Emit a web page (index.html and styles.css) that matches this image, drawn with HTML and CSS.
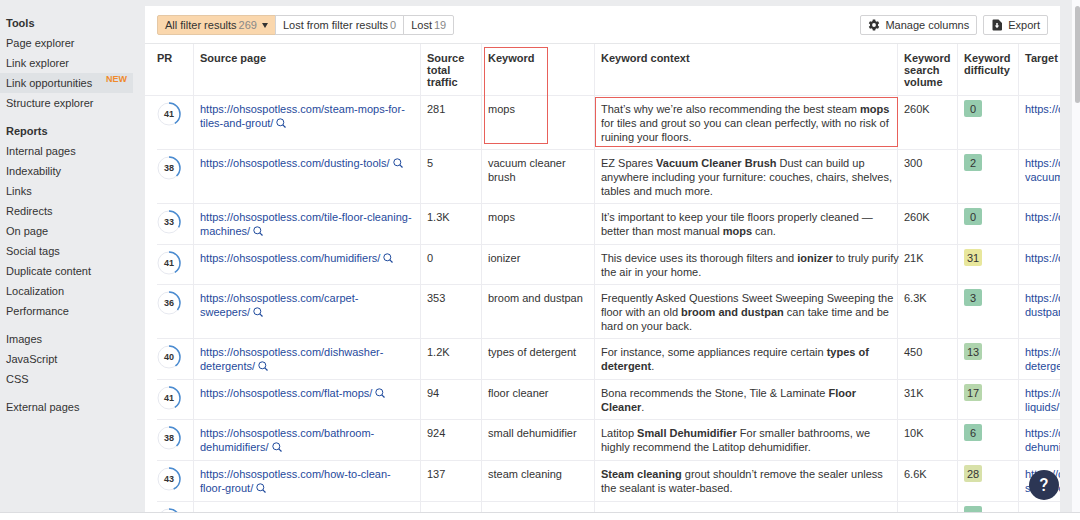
FILE: index.html
```html
<!DOCTYPE html>
<html lang="en">
<head>
<meta charset="UTF-8">
<meta name="viewport" content="width=device-width, initial-scale=1.0">
<title>Link opportunities</title>
<link rel="stylesheet" href="styles.css">
</head>
<body>

<!-- Shared icons -->
<svg class="sprite" aria-hidden="true">
  <symbol id="search" viewBox="0 0 10 10">
    <circle cx="4.3" cy="4.3" r="3.5" fill="none" stroke="currentColor" stroke-width="1"/>
    <path d="M6.8 6.8 9.5 9.5" stroke="currentColor" stroke-width="1.2"/>
  </symbol>
</svg>

<div class="app">
  <nav class="sidebar">
    <h2>Tools</h2>
    <ul>
      <li><a href="#">Page explorer</a></li>
      <li><a href="#">Link explorer</a></li>
      <li class="active"><a href="#">Link opportunities</a><span class="new">NEW</span></li>
      <li><a href="#">Structure explorer</a></li>
    </ul>
    <h2>Reports</h2>
    <ul>
      <li><a href="#">Internal pages</a></li>
      <li><a href="#">Indexability</a></li>
      <li><a href="#">Links</a></li>
      <li><a href="#">Redirects</a></li>
      <li><a href="#">On page</a></li>
      <li><a href="#">Social tags</a></li>
      <li><a href="#">Duplicate content</a></li>
      <li><a href="#">Localization</a></li>
      <li><a href="#">Performance</a></li>
    </ul>
    <ul>
      <li><a href="#">Images</a></li>
      <li><a href="#">JavaScript</a></li>
      <li><a href="#">CSS</a></li>
    </ul>
    <ul>
      <li><a href="#">External pages</a></li>
    </ul>
  </nav>

  <main class="panel">
    <div class="toolbar">
      <div class="filters">
        <button class="filter selected">All filter results <span>269</span><i class="caret"></i></button>
        <button class="filter">Lost from filter results <span>0</span></button>
        <button class="filter">Lost <span>19</span></button>
      </div>
      <div class="actions">
        <button class="action">
          <svg width="12" height="12" viewBox="0 0 12 12"><path fill="#333" fill-rule="evenodd" d="M4.8 0.6h2.4l.3 1.5 1 .6 1.5-.5 1.2 2.1-1.2 1v1.4l1.2 1-1.2 2.1-1.5-.5-1 .6-.3 1.500H4.800l-.3-1.500-1-.6-1.500.5L.8 7.700l1.200-1V5.300l-1.200-1L2 2.200l1.500.5 1-.6zM6 4.100a1.900 1.900 0 1 0 0 3.800 1.900 1.900 0 0 0 0-3.800z"/></svg>
          Manage columns
        </button>
        <button class="action">
          <svg width="12" height="12" viewBox="0 0 12 12"><path fill="#333" d="M2.500 .5h5l3.500 3.500v6.500a1 1 0 0 1-1 1H2.500a1 1 0 0 1-1-1v-9a1 1 0 0 1 1-1z"/><path d="M6 4v3" stroke="#fff" stroke-width="1.500"/><path fill="#fff" d="M3.800 6.500h4.400L6 9.200z"/></svg>
          Export
        </button>
      </div>
    </div>

    <table class="results">
      <colgroup>
        <col class="col-pr"><col class="col-source"><col class="col-traffic"><col class="col-keyword">
        <col class="col-context"><col class="col-volume"><col class="col-difficulty"><col class="col-target">
      </colgroup>
      <thead>
        <tr>
          <th>PR</th>
          <th>Source page</th>
          <th>Source total traffic</th>
          <th class="marked">Keyword<div class="mark mark-keyword"></div></th>
          <th>Keyword context</th>
          <th>Keyword search volume</th>
          <th>Keyword difficulty</th>
          <th>Target page</th>
        </tr>
      </thead>
      <tbody>
        <tr>
          <td><div class="ring"><svg viewBox="0 0 24 24"><circle cx="12" cy="12" r="11"/><circle class="arc" cx="12" cy="12" r="11" pathLength="100" stroke-dasharray="41 59"/></svg>41</div></td>
          <td><a href="#">https://ohsospotless.com/steam-mops-for-<br>tiles-and-grout/ <svg class="lens"><use href="#search"/></svg></a></td>
          <td>281</td>
          <td>mops</td>
          <td class="marked">That’s why we’re also recommending the best steam <b>mops</b><br>for tiles and grout so you can clean perfectly, with no risk of<br>ruining your floors.<div class="mark mark-context"></div></td>
          <td>260K</td>
          <td><span class="kd kd-easy">0</span></td>
          <td><a href="#">https://ohsospotless.com/</a></td>
        </tr>
        <tr>
          <td><div class="ring"><svg viewBox="0 0 24 24"><circle cx="12" cy="12" r="11"/><circle class="arc" cx="12" cy="12" r="11" pathLength="100" stroke-dasharray="38 62"/></svg>38</div></td>
          <td><a href="#">https://ohsospotless.com/dusting-tools/ <svg class="lens"><use href="#search"/></svg></a></td>
          <td>5</td>
          <td>vacuum cleaner<br>brush</td>
          <td>EZ Spares <b>Vacuum Cleaner Brush</b> Dust can build up<br>anywhere including your furniture: couches, chairs, shelves,<br>tables and much more.</td>
          <td>300</td>
          <td><span class="kd kd-easy">2</span></td>
          <td><a href="#">https://ohsospotless.com/<br>vacuum-brush/</a></td>
        </tr>
        <tr>
          <td><div class="ring"><svg viewBox="0 0 24 24"><circle cx="12" cy="12" r="11"/><circle class="arc" cx="12" cy="12" r="11" pathLength="100" stroke-dasharray="33 67"/></svg>33</div></td>
          <td><a href="#">https://ohsospotless.com/tile-floor-cleaning-<br>machines/ <svg class="lens"><use href="#search"/></svg></a></td>
          <td>1.3K</td>
          <td>mops</td>
          <td>It’s important to keep your tile floors properly cleaned —<br>better than most manual <b>mops</b> can.</td>
          <td>260K</td>
          <td><span class="kd kd-easy">0</span></td>
          <td><a href="#">https://ohsospotless.com/</a></td>
        </tr>
        <tr>
          <td><div class="ring"><svg viewBox="0 0 24 24"><circle cx="12" cy="12" r="11"/><circle class="arc" cx="12" cy="12" r="11" pathLength="100" stroke-dasharray="41 59"/></svg>41</div></td>
          <td><a href="#">https://ohsospotless.com/humidifiers/ <svg class="lens"><use href="#search"/></svg></a></td>
          <td>0</td>
          <td>ionizer</td>
          <td>This device uses its thorough filters and <b>ionizer</b> to truly purify<br>the air in your home.</td>
          <td>21K</td>
          <td><span class="kd kd-31">31</span></td>
          <td><a href="#">https://ohsospotless.com/</a></td>
        </tr>
        <tr>
          <td><div class="ring"><svg viewBox="0 0 24 24"><circle cx="12" cy="12" r="11"/><circle class="arc" cx="12" cy="12" r="11" pathLength="100" stroke-dasharray="36 64"/></svg>36</div></td>
          <td><a href="#">https://ohsospotless.com/carpet-<br>sweepers/ <svg class="lens"><use href="#search"/></svg></a></td>
          <td>353</td>
          <td>broom and dustpan</td>
          <td>Frequently Asked Questions Sweet Sweeping Sweeping the<br>floor with an old <b>broom and dustpan</b> can take time and be<br>hard on your back.</td>
          <td>6.3K</td>
          <td><span class="kd kd-easy">3</span></td>
          <td><a href="#">https://ohsospotless.com/<br>dustpan/</a></td>
        </tr>
        <tr>
          <td><div class="ring"><svg viewBox="0 0 24 24"><circle cx="12" cy="12" r="11"/><circle class="arc" cx="12" cy="12" r="11" pathLength="100" stroke-dasharray="40 60"/></svg>40</div></td>
          <td><a href="#">https://ohsospotless.com/dishwasher-<br>detergents/ <svg class="lens"><use href="#search"/></svg></a></td>
          <td>1.2K</td>
          <td>types of detergent</td>
          <td>For instance, some appliances require certain <b>types of<br>detergent</b>.</td>
          <td>450</td>
          <td><span class="kd kd-13">13</span></td>
          <td><a href="#">https://ohsospotless.com/<br>detergents/</a></td>
        </tr>
        <tr>
          <td><div class="ring"><svg viewBox="0 0 24 24"><circle cx="12" cy="12" r="11"/><circle class="arc" cx="12" cy="12" r="11" pathLength="100" stroke-dasharray="41 59"/></svg>41</div></td>
          <td><a href="#">https://ohsospotless.com/flat-mops/ <svg class="lens"><use href="#search"/></svg></a></td>
          <td>94</td>
          <td>floor cleaner</td>
          <td>Bona recommends the Stone, Tile &amp; Laminate <b>Floor<br>Cleaner</b>.</td>
          <td>31K</td>
          <td><span class="kd kd-17">17</span></td>
          <td><a href="#">https://ohsospotless.com/<br>liquids/</a></td>
        </tr>
        <tr>
          <td><div class="ring"><svg viewBox="0 0 24 24"><circle cx="12" cy="12" r="11"/><circle class="arc" cx="12" cy="12" r="11" pathLength="100" stroke-dasharray="38 62"/></svg>38</div></td>
          <td><a href="#">https://ohsospotless.com/bathroom-<br>dehumidifiers/ <svg class="lens"><use href="#search"/></svg></a></td>
          <td>924</td>
          <td>small dehumidifier</td>
          <td>Latitop <b>Small Dehumidifier</b> For smaller bathrooms, we<br>highly recommend the Latitop dehumidifier.</td>
          <td>10K</td>
          <td><span class="kd kd-easy">6</span></td>
          <td><a href="#">https://ohsospotless.com/<br>dehumidifiers/</a></td>
        </tr>
        <tr>
          <td><div class="ring"><svg viewBox="0 0 24 24"><circle cx="12" cy="12" r="11"/><circle class="arc" cx="12" cy="12" r="11" pathLength="100" stroke-dasharray="43 57"/></svg>43</div></td>
          <td><a href="#">https://ohsospotless.com/how-to-clean-<br>floor-grout/ <svg class="lens"><use href="#search"/></svg></a></td>
          <td>137</td>
          <td>steam cleaning</td>
          <td><b>Steam cleaning</b> grout shouldn’t remove the sealer unless<br>the sealant is water-based.</td>
          <td>6.6K</td>
          <td><span class="kd kd-28">28</span></td>
          <td><a href="#">https://ohsospotless.com/<br>steam-cleaners/</a></td>
        </tr>
        <tr>
          <td><div class="ring"><svg viewBox="0 0 24 24"><circle cx="12" cy="12" r="11"/><circle class="arc" cx="12" cy="12" r="11" pathLength="100" stroke-dasharray="40 60"/></svg></div></td>
          <td></td>
          <td></td>
          <td></td>
          <td></td>
          <td></td>
          <td><span class="kd kd-easy"></span></td>
          <td></td>
        </tr>
      </tbody>
    </table>
  </main>

  <div class="scrollbar"><div class="thumb"></div></div>
  <button class="help" aria-label="Help">?</button>
</div>
<footer class="bottom"></footer>

</body>
</html>
```
FILE: styles.css
```css
* {
  box-sizing: border-box;
}

body {
  margin: 0;
  height: 100vh;
  display: flex;
  flex-direction: column;
  overflow: hidden;
  background: #ebecee;
  color: #333;
  font-family: "Liberation Sans", Arial, sans-serif;
  font-size: 11px;
  line-height: 14px;
}

button {
  font: inherit;
  color: inherit;
  cursor: pointer;
}

a {
  color: inherit;
  text-decoration: none;
}

.sprite {
  display: none;
}

.app {
  position: relative;
  flex: 1;
  min-height: 0;
  display: flex;
}

/* Sidebar */
.sidebar {
  width: 133px;
  margin-right: 12px;
  padding-top: 13px;
  flex-shrink: 0;
}

.sidebar h2 {
  margin: 0;
  padding-left: 6px;
  font-size: 11px;
  line-height: 20px;
}

.sidebar ul {
  list-style: none;
  margin: 0 0 8px;
  padding: 0;
}

.sidebar li {
  display: flex;
  justify-content: space-between;
  padding: 0 6px;
  line-height: 20px;
}

.sidebar .active {
  background: #dfe2e5;
}

.new {
  color: #f08a2c;
  font-size: 9px;
  font-weight: bold;
  line-height: 12px;
}

/* Main panel */
.panel {
  flex: 1;
  min-width: 0;
  margin-top: 6px;
  background: #fff;
  overflow: hidden;
}

.toolbar {
  display: flex;
  justify-content: space-between;
  padding: 9px 12px 8px;
  border-bottom: 1px solid #e6e7e9;
}

.filters,
.actions {
  display: flex;
}

.actions {
  gap: 6px;
}

.filter,
.action {
  display: flex;
  align-items: center;
  height: 20px;
  padding: 0 7px;
  background: #fff;
  border: 1px solid #d3d3d5;
}

.filter {
  gap: 2px;
  margin-left: -1px;
}

.filter span {
  color: #888;
}

.filter:first-child {
  margin-left: 0;
  border-radius: 2px 0 0 2px;
}

.filter:last-child {
  border-radius: 0 2px 2px 0;
}

.filter.selected {
  background: #fad7ad;
  border-color: #e5c8a5;
}

.caret {
  margin-left: 3px;
  border: 3px solid transparent;
  border-top: 5px solid #333;
  border-bottom: 0;
}

.action {
  gap: 5px;
  border-radius: 2px;
}

/* Results table, wider than the panel */
.results {
  width: calc(100% + 120px);
  table-layout: fixed;
  border-collapse: separate;
  border-spacing: 0;
  white-space: nowrap;
}

.col-pr { width: 49px; }
.col-source { width: 227px; }
.col-traffic { width: 61px; }
.col-keyword { width: 113px; }
.col-volume { width: 60px; }
.col-difficulty { width: 61px; }
.col-target { width: 161px; }

.results th,
.results td {
  padding: 6px 6px 5px;
  border-right: 1px solid #ececf0;
  border-bottom: 1px solid #ececf0;
  text-align: left;
  vertical-align: top;
}

.results th {
  padding: 8px 6px 7px;
  line-height: 12px;
  white-space: normal;
}

.results th:first-child,
.results td:first-child {
  padding-left: 12px;
}

/* The row line starts under the ring, not at the panel edge */
.results td:first-child {
  border-bottom: 0;
  background: linear-gradient(#ececf0, #ececf0) 12px 100% / 100% 1px no-repeat;
}

.results a {
  color: #1f4a9c;
}

.lens {
  width: 10px;
  height: 10px;
  margin-bottom: 3px;
  vertical-align: -4px;
}

.ring {
  position: relative;
  width: 24px;
  height: 24px;
  font-size: 9px;
  font-weight: bold;
  line-height: 24px;
  text-align: center;
}

.ring svg {
  position: absolute;
  inset: 0;
  fill: none;
  stroke: #e6e8ef;
  transform: rotate(-90deg);
}

.ring .arc {
  stroke: #4a8bd0;
  stroke-width: 1.5;
}

.kd {
  display: block;
  width: 18px;
  height: 17px;
  margin-top: -2px;
  border-radius: 2px;
  line-height: 18px;
  text-align: center;
}

.kd-easy { background: #96ccae; }
.kd-13 { background: #aed4ae; }
.kd-17 { background: #b7d7ac; }
.kd-28 { background: #d8e1a9; }
.kd-31 { background: #e8e79c; }

/* Red highlight boxes */
.marked {
  position: relative;
}

.mark {
  position: absolute;
  z-index: 1;
  border: 1px solid #e8605a;
}

.mark-keyword {
  top: 3px;
  left: 2px;
  width: 64px;
  height: 97px;
}

.mark-context {
  inset: 1px -1px 2px 0;
}

/* Scrollbar and help */
.scrollbar {
  width: 8px;
  margin-left: 12px;
  padding: 6px 0 0 3px;
  background: #fafafc;
}

.thumb {
  height: 97px;
  background: #c1c1c3;
  border-radius: 3px;
}

.help {
  position: absolute;
  right: 21px;
  bottom: 12px;
  z-index: 2;
  width: 30px;
  height: 30px;
  padding: 0;
  border: 0;
  border-radius: 50%;
  background: #2c3654;
  color: #fff;
  font-family: Roboto, sans-serif;
  font-size: 18px;
  font-weight: 500;
}

.bottom {
  height: 8px;
  background: #fff;
  border-top: 1px solid #dcdde0;
}
```
